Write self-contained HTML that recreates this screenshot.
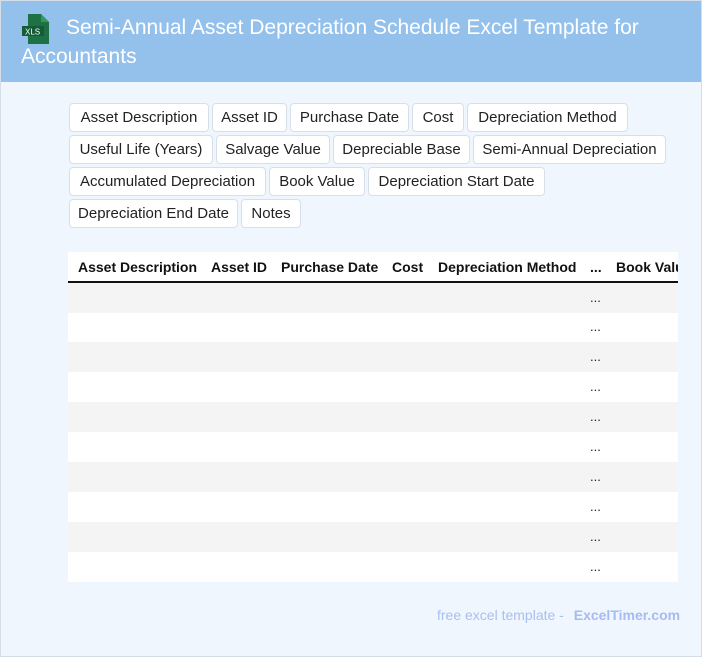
<!DOCTYPE html>
<html><head><meta charset="utf-8"><style>
*{margin:0;padding:0;box-sizing:border-box}
body{width:702px;height:657px;background:#eff6fe;font-family:"Liberation Sans",Arial,sans-serif;position:relative;overflow:hidden}
.bd{position:absolute;left:0;top:0;width:702px;height:657px;border:1px solid #d6dde6;pointer-events:none}
.hd{position:absolute;left:0;top:0;width:702px;height:82px;background:#93c1ec}
.hd h1{position:absolute;left:21px;top:13px;width:640px;font-weight:normal;color:#fff;font-size:21px;line-height:29px;text-indent:45px}
.ic{position:absolute;left:22px;top:14px}
.t{position:absolute;height:29px;background:#fff;border:1px solid #d8dfe8;border-radius:4px;font-size:15px;color:#222;line-height:28px;text-align:center;white-space:nowrap}
.tb{position:absolute;left:68px;top:252px;width:610px;height:330px;background:#fff;overflow:hidden}
.th{position:absolute;top:0;left:0;width:610px;height:31px;border-bottom:2px solid #111}
.th span{position:absolute;top:7px;font-weight:bold;font-size:14px;color:#111;white-space:nowrap}
.r{position:absolute;left:0;width:610px;height:30px}
.r span{position:absolute;left:522px;top:7px;font-size:13px;color:#222}
.ft{position:absolute;top:607px;left:437px;font-size:14px;color:#a9bff0}
.ft b{margin-left:6px;color:#a5bcf0}
</style></head><body>
<div class="hd">
<svg class="ic" width="30" height="30" viewBox="0 0 30 30"><path d="M6 0h13l8 8v22H6z" fill="#1e7145"/><path d="M19 0v8h8z" fill="#2f9a5e"/><rect x="0" y="12" width="22" height="10" fill="#155c36"/><text x="3" y="20.5" font-size="8" fill="#fff" font-family="Liberation Sans">XLS</text></svg>
<h1>Semi-Annual Asset Depreciation Schedule Excel Template for Accountants</h1>
</div>
<div class="t" style="left:69px;top:103px;width:140px">Asset Description</div>
<div class="t" style="left:212px;top:103px;width:75px">Asset ID</div>
<div class="t" style="left:290px;top:103px;width:119px">Purchase Date</div>
<div class="t" style="left:412px;top:103px;width:52px">Cost</div>
<div class="t" style="left:467px;top:103px;width:161px">Depreciation Method</div>
<div class="t" style="left:69px;top:135px;width:144px">Useful Life (Years)</div>
<div class="t" style="left:216px;top:135px;width:114px">Salvage Value</div>
<div class="t" style="left:333px;top:135px;width:137px">Depreciable Base</div>
<div class="t" style="left:473px;top:135px;width:193px">Semi-Annual Depreciation</div>
<div class="t" style="left:69px;top:167px;width:197px">Accumulated Depreciation</div>
<div class="t" style="left:269px;top:167px;width:96px">Book Value</div>
<div class="t" style="left:368px;top:167px;width:177px">Depreciation Start Date</div>
<div class="t" style="left:69px;top:199px;width:169px">Depreciation End Date</div>
<div class="t" style="left:241px;top:199px;width:60px">Notes</div>
<div class="tb">
<div class="th"><span style="left:10px">Asset Description</span><span style="left:143px">Asset ID</span><span style="left:213px">Purchase Date</span><span style="left:324px">Cost</span><span style="left:370px">Depreciation Method</span><span style="left:522px">...</span><span style="left:548px">Book Value</span></div>
<div class="r" style="top:31px;background:#f4f4f4"><span>...</span></div>
<div class="r" style="top:60px"><span>...</span></div>
<div class="r" style="top:90px;background:#f4f4f4"><span>...</span></div>
<div class="r" style="top:120px"><span>...</span></div>
<div class="r" style="top:150px;background:#f4f4f4"><span>...</span></div>
<div class="r" style="top:180px"><span>...</span></div>
<div class="r" style="top:210px;background:#f4f4f4"><span>...</span></div>
<div class="r" style="top:240px"><span>...</span></div>
<div class="r" style="top:270px;background:#f4f4f4"><span>...</span></div>
<div class="r" style="top:300px"><span>...</span></div>
</div>
<div class="ft">free excel template - <b>ExcelTimer.com</b></div>
<div class="bd"></div>
</body></html>
